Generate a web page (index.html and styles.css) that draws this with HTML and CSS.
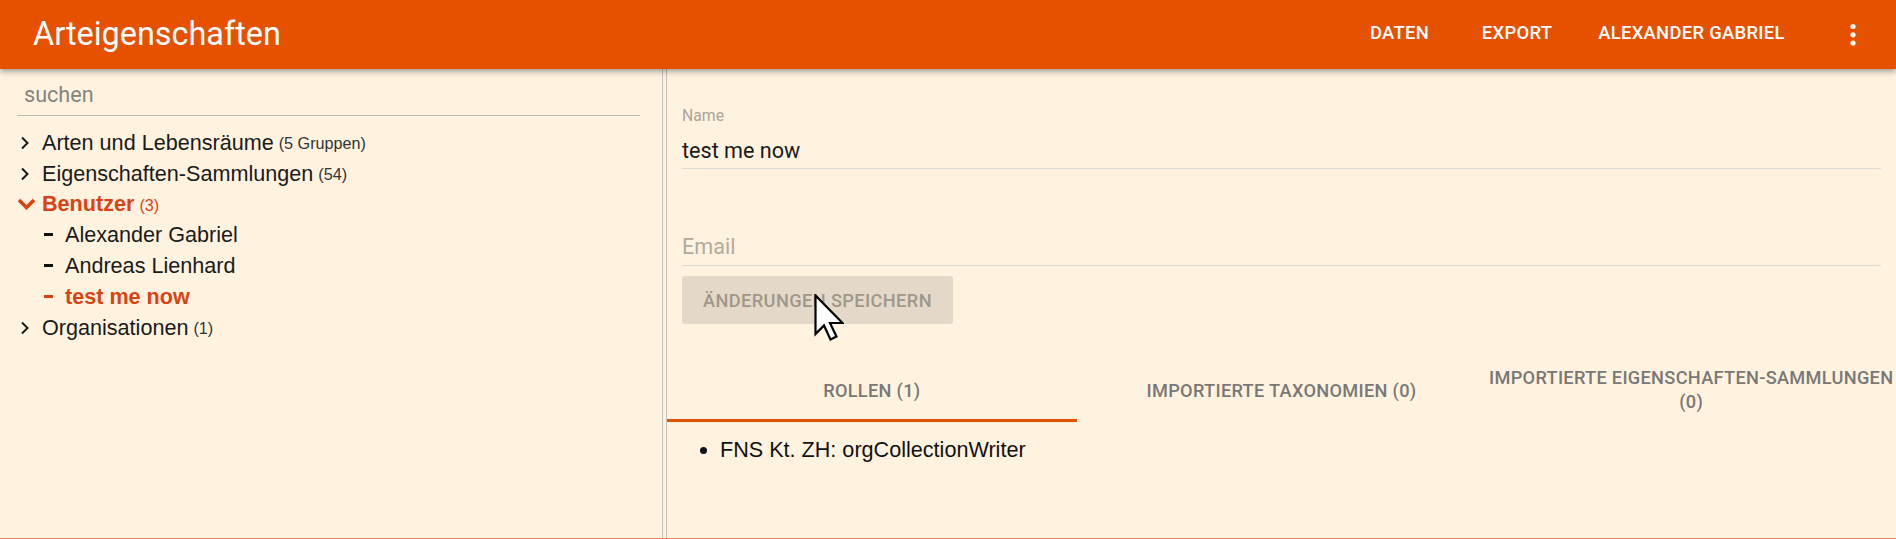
FILE: index.html
```html
<!DOCTYPE html>
<html lang="de">
<head>
<meta charset="utf-8">
<title>Arteigenschaften</title>
<link rel="stylesheet" href="styles.css">
</head>
<body>
<header class="appbar">
  <div class="title">Arteigenschaften</div>
  <nav class="nav">
    <span class="nav-btn nav-daten">DATEN</span>
    <span class="nav-btn nav-export">EXPORT</span>
    <span class="nav-btn nav-user">ALEXANDER GABRIEL</span>
    <span class="kebab">
      <svg width="8" height="26" viewBox="0 0 8 26"><circle cx="4" cy="4.5" r="2.6" fill="#fff"/><circle cx="4" cy="12.8" r="2.6" fill="#fff"/><circle cx="4" cy="21.1" r="2.6" fill="#fff"/></svg>
    </span>
  </nav>
</header>
<main class="main">
  <aside class="tree-pane">
    <div class="search"><span class="search-text">suchen</span></div>
    <ul class="tree">
      <li class="row">
        <span class="icon"><svg width="14" height="14" viewBox="0 0 14 14"><polyline points="4,1.5 9.5,7 4,12.5" fill="none" stroke="#1a1a1a" stroke-width="2"/></svg></span>
        <span class="label">Arten und Lebensräume</span><span class="count">(5 Gruppen)</span>
      </li>
      <li class="row">
        <span class="icon"><svg width="14" height="14" viewBox="0 0 14 14"><polyline points="4,1.5 9.5,7 4,12.5" fill="none" stroke="#1a1a1a" stroke-width="2"/></svg></span>
        <span class="label">Eigenschaften-Sammlungen</span><span class="count">(54)</span>
      </li>
      <li class="row active">
        <span class="icon icon-open"><svg width="20" height="14" viewBox="0 0 20 14"><polyline points="2,3 9.5,10.5 17,3" fill="none" stroke="#d84315" stroke-width="3.6"/></svg></span>
        <span class="label">Benutzer</span><span class="count">(3)</span>
      </li>
      <li class="row child">
        <span class="dash"></span><span class="label">Alexander Gabriel</span>
      </li>
      <li class="row child">
        <span class="dash"></span><span class="label">Andreas Lienhard</span>
      </li>
      <li class="row child active">
        <span class="dash"></span><span class="label">test me now</span>
      </li>
      <li class="row">
        <span class="icon"><svg width="14" height="14" viewBox="0 0 14 14"><polyline points="4,1.5 9.5,7 4,12.5" fill="none" stroke="#1a1a1a" stroke-width="2"/></svg></span>
        <span class="label">Organisationen</span><span class="count">(1)</span>
      </li>
    </ul>
  </aside>
  <div class="divider"></div>
  <section class="detail">
    <div class="field field-name">
      <div class="field-label">Name</div>
      <div class="field-input">test me now</div>
    </div>
    <div class="field field-email">
      <div class="field-input placeholder">Email</div>
    </div>
    <div class="save-btn">ÄNDERUNGEN SPEICHERN</div>
    <div class="tabs">
      <div class="tab tab-active">ROLLEN (1)</div>
      <div class="tab">IMPORTIERTE TAXONOMIEN (0)</div>
      <div class="tab tab-wide"><span class="nowrap">IMPORTIERTE EIGENSCHAFTEN-SAMMLUNGEN</span> (0)</div>
    </div>
    <ul class="roles">
      <li>FNS Kt. ZH: orgCollectionWriter</li>
    </ul>
  </section>
</main>
<div class="bottom-line"></div>
<svg class="cursor" width="30" height="48" viewBox="0 0 30 48"><path d="M1.5 1.5 L1.5 40 L10 31.5 L16.5 45.5 L22.5 42.5 L16 29 L28.5 29 Z" fill="#fff" stroke="#000" stroke-width="2.2" stroke-linejoin="miter"/></svg>
</body>
</html>
```

FILE: styles.css
```css
* { box-sizing: border-box; }

html, body {
  margin: 0;
  padding: 0;
}

body {
  width: 1896px;
  height: 539px;
  overflow: hidden;
  background: #fff3e0;
  font-family: "Liberation Sans", Arial, sans-serif;
  color: #1a1a1a;
  display: flex;
  flex-direction: column;
  position: relative;
}

/* ---------- App bar ---------- */
.appbar {
  height: 69px;
  flex: 0 0 69px;
  background: #e65100;
  display: flex;
  align-items: center;
  padding-left: 33px;
  padding-right: 14px;
  position: relative;
  z-index: 2;
  box-shadow: 0 2px 4px -1px rgba(0,0,0,0.2), 0 4px 5px 0 rgba(0,0,0,0.14), 0 1px 10px 0 rgba(0,0,0,0.12);
}

.title {
  font-family: Roboto, "Liberation Sans", sans-serif;
  font-size: 32.4px;
  color: #fff;
  flex: 1;
  line-height: 1;
}

.nav {
  display: flex;
  align-items: center;
  height: 100%;
}

.nav-btn {
  font-family: Roboto, "Liberation Sans", sans-serif;
  font-weight: 500;
  font-size: 18.4px;
  letter-spacing: 0.3px;
  color: #fff;
  text-align: center;
  white-space: nowrap;
  margin-top: -4px;
}

.nav-daten { width: 106px; }
.nav-export { width: 106px; margin-left: 11.5px; }
.nav-user { width: 206px; margin-left: 18.5px; }

.kebab {
  width: 58px;
  margin-left: 29.5px;
  display: flex;
  justify-content: center;
  align-items: center;
}

/* ---------- Main ---------- */
.main {
  flex: 1;
  display: flex;
  min-height: 0;
}

.tree-pane {
  width: 662px;
  flex: 0 0 662px;
}

.divider {
  width: 5px;
  flex: 0 0 5px;
  border-left: 1px solid #c6c0b8;
  border-right: 1px solid #c6c0b8;
}

.search {
  margin: 3px 22px 0 17px;
  height: 44px;
  border-bottom: 1px solid #bcbab6;
  display: flex;
  align-items: center;
  padding-left: 7px;
  padding-top: 1px;
}

.search-text {
  font-family: Roboto, "Liberation Sans", sans-serif;
  font-size: 21.6px;
  color: #858380;
}

.tree {
  list-style: none;
  margin: 11.5px 0 0 0;
  padding: 0;
}

.row {
  height: 30.8px;
  display: flex;
  align-items: center;
  font-size: 21.6px;
  white-space: nowrap;
}

.icon {
  width: 14px;
  margin-left: 18px;
  margin-right: 10px;
  display: flex;
  align-items: center;
}

.icon-open {
  width: 20px;
  margin-left: 17px;
  margin-right: 5px;
}

.label {
  color: #1a1a1a;
}

.count {
  font-size: 16.2px;
  color: #333;
  margin-left: 5px;
  padding-top: 2px;
}

.active .label {
  color: #d84315;
  font-weight: bold;
}

.active .count {
  color: #d84315;
}

.child .dash {
  width: 9px;
  height: 3px;
  background: #111;
  margin-left: 44px;
  margin-right: 12px;
  margin-top: -1px;
}

.child.active .dash {
  background: #d84315;
}

/* ---------- Detail ---------- */
.detail {
  flex: 1;
  padding: 37px 15px 0 15px;
  font-family: Roboto, "Liberation Sans", sans-serif;
  min-width: 0;
}

.field {
  border-bottom: 1px solid #dedad4;
}

.field-label {
  font-size: 15.8px;
  color: #aaa49b;
  line-height: 20px;
  height: 20px;
}

.field-input {
  font-size: 21.6px;
  line-height: 30px;
  color: #1a1a1a;
  margin-top: 10px;
  margin-bottom: 2px;
}

.field-email .field-input {
  margin-top: 62.5px;
  margin-bottom: 3px;
}

.placeholder {
  color: #b2aa9f;
}

.save-btn {
  margin-top: 10.8px;
  width: 271px;
  height: 48px;
  background: #e4d9c8;
  border-radius: 3px;
  font-weight: 500;
  font-size: 18.2px;
  letter-spacing: 0.4px;
  color: #a0978b;
  display: flex;
  align-items: center;
  justify-content: center;
  white-space: nowrap;
}

.tabs {
  margin-top: 34.8px;
  margin-left: -15px;
  margin-right: -15px;
  display: flex;
  height: 63px;
}

.tab {
  flex: 1;
  display: flex;
  align-items: center;
  justify-content: center;
  text-align: center;
  font-weight: 500;
  font-size: 18.2px;
  letter-spacing: 0.3px;
  line-height: 24px;
  color: #7a7876;
  padding-top: 1px;
}

.tab-active {
  border-bottom: 3px solid #e65100;
  padding-top: 4px;
}

.tab-wide {
  padding: 0;
  display: block;
  padding-top: 7px;
}

.nowrap {
  white-space: nowrap;
}

.roles {
  margin: 15px 0 0 0;
  padding-left: 38px;
  font-family: "Liberation Sans", Arial, sans-serif;
  font-size: 21.6px;
  line-height: 25px;
  color: #111;
}

/* ---------- Bottom ---------- */
.bottom-line {
  height: 1px;
  flex: 0 0 1px;
  background: #e8864e;
}

.cursor {
  position: absolute;
  left: 814px;
  top: 294px;
  z-index: 5;
}
```
